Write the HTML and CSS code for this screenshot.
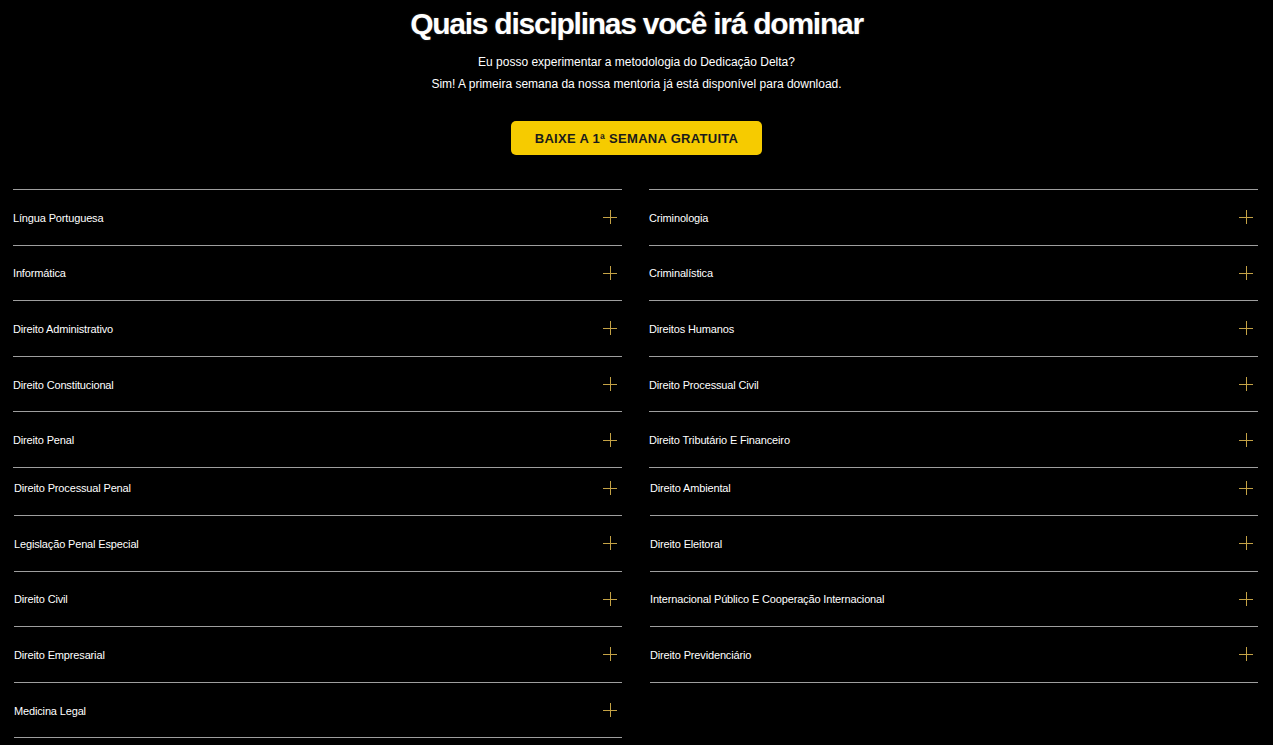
FILE: index.html
```html
<!DOCTYPE html>
<html lang="pt-BR">
<head>
<meta charset="utf-8">
<title>Quais disciplinas você irá dominar</title>
<link rel="stylesheet" href="styles.css">
</head>
<body>
<section class="hero">
  <h1 class="title">Quais disciplinas você irá dominar</h1>
  <p class="lead">Eu posso experimentar a metodologia do Dedicação Delta?</p>
  <p class="lead">Sim! A primeira semana da nossa mentoria já está disponível para download.</p>
  <a class="cta" href="#">BAIXE A 1ª SEMANA GRATUITA</a>
</section>

<section class="subjects">
  <div class="group group-a">
    <ul class="list">
      <li class="item"><span>Língua Portuguesa</span><i class="plus"></i></li>
      <li class="item"><span>Informática</span><i class="plus"></i></li>
      <li class="item"><span>Direito Administrativo</span><i class="plus"></i></li>
      <li class="item"><span>Direito Constitucional</span><i class="plus"></i></li>
      <li class="item"><span>Direito Penal</span><i class="plus"></i></li>
    </ul>
    <ul class="list">
      <li class="item"><span>Criminologia</span><i class="plus"></i></li>
      <li class="item"><span>Criminalística</span><i class="plus"></i></li>
      <li class="item"><span>Direitos Humanos</span><i class="plus"></i></li>
      <li class="item"><span>Direito Processual Civil</span><i class="plus"></i></li>
      <li class="item"><span>Direito Tributário E Financeiro</span><i class="plus"></i></li>
    </ul>
  </div>
  <div class="group group-b">
    <ul class="list">
      <li class="item"><span>Direito Processual Penal</span><i class="plus"></i></li>
      <li class="item"><span>Legislação Penal Especial</span><i class="plus"></i></li>
      <li class="item"><span>Direito Civil</span><i class="plus"></i></li>
      <li class="item"><span>Direito Empresarial</span><i class="plus"></i></li>
      <li class="item"><span>Medicina Legal</span><i class="plus"></i></li>
    </ul>
    <ul class="list">
      <li class="item"><span>Direito Ambiental</span><i class="plus"></i></li>
      <li class="item"><span>Direito Eleitoral</span><i class="plus"></i></li>
      <li class="item"><span>Internacional Público E Cooperação Internacional</span><i class="plus"></i></li>
      <li class="item"><span>Direito Previdenciário</span><i class="plus"></i></li>
    </ul>
  </div>
</section>
</body>
</html>
```

FILE: styles.css
```css
html, body {
  margin: 0;
  padding: 0;
  background: #000;
  color: #fff;
  font-family: "Liberation Sans", Arial, sans-serif;
}

.hero {
  display: flex;
  flex-direction: column;
  align-items: center;
  padding-top: 5px;
}

.title {
  margin: 0;
  font-size: 30px;
  line-height: 37px;
  font-weight: 700;
  letter-spacing: -1.25px;
  text-shadow: 0 0 2px rgba(255,255,255,0.25);
}

.lead {
  margin: 0;
  font-size: 12px;
  line-height: 22px;
}

.lead:first-of-type {
  margin-top: 9px;
}

.cta {
  margin-top: 26px;
  display: flex;
  align-items: center;
  justify-content: center;
  width: 251px;
  height: 34px;
  box-sizing: border-box;
  background: #f6cb00;
  border-radius: 5px;
  color: #1b1b1b;
  font-size: 13px;
  font-weight: 700;
  letter-spacing: 0.3px;
  text-decoration: none;
}

.subjects {
  margin: 34px 15px 0 13px;
}

.group {
  display: grid;
  grid-template-columns: 609px 609px;
  column-gap: 27px;
  align-items: start;
}

.group-b {
  padding-left: 1px;
  grid-template-columns: 608px 608px;
  column-gap: 28px;
}

.list {
  list-style: none;
  margin: 0;
  padding: 0;
}

.group-a .list {
  border-top: 1px solid #9e9e9e;
}

.item {
  display: flex;
  align-items: center;
  justify-content: space-between;
  height: 54.6px;
  border-bottom: 1px solid #9e9e9e;
  font-size: 11px;
  line-height: 13px;
  letter-spacing: -0.15px;
  color: #fff;
  padding-right: 5px;
}

.group-b .item:first-child {
  height: 40px;
  padding-bottom: 7px;
}

.item span {
  padding-top: 2px;
}

.plus {
  position: relative;
  width: 14px;
  height: 14px;
  flex: none;
}

.plus::before,
.plus::after {
  content: "";
  position: absolute;
  background: #c4a245;
}

.plus::before {
  left: 0;
  right: 0;
  top: 7px;
  height: 1px;
}

.plus::after {
  top: 0;
  bottom: 0;
  left: 7px;
  width: 1px;
}
```
